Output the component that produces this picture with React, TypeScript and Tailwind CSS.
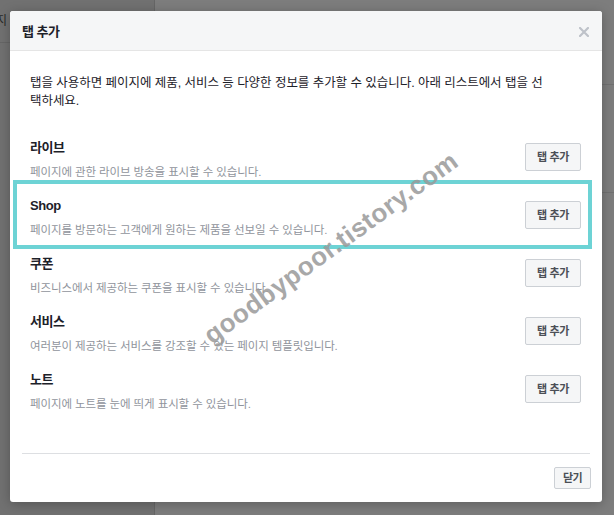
import React from "react";

const items = [
  { t: "라이브", d: "페이지에 관한 라이브 방송을 표시할 수 있습니다." },
  { t: "Shop", d: "페이지를 방문하는 고객에게 원하는 제품을 선보일 수 있습니다." },
  { t: "쿠폰", d: "비즈니스에서 제공하는 쿠폰을 표시할 수 있습니다." },
  { t: "서비스", d: "여러분이 제공하는 서비스를 강조할 수 있는 페이지 템플릿입니다." },
  { t: "노트", d: "페이지에 노트를 눈에 띄게 표시할 수 있습니다." },
];

export default function App() {
  return (
    <div
      className="relative w-[614px] h-[515px] overflow-hidden flex bg-[#7d7d7d]"
      style={{ fontFamily: '"Liberation Sans", "Noto Sans CJK KR", sans-serif' }}
    >
      {/* dimmed page behind */}
      <div className="w-[155px] h-full bg-[#717171] border-r border-[#666666] flex flex-col">
        <div className="h-[43px] border-b border-[#666666] flex items-center">
          <span className="text-[12px] text-[#2a2a2a] -ml-[4px]">지</span>
        </div>
      </div>
      <div className="flex-1 flex flex-col">
        <div className="h-[85px] border-b border-[#717171]" />
        <div className="h-[108px] border-b border-[#717171]" />
      </div>

      {/* dialog */}
      <div className="absolute left-[10px] top-[11px] w-[592px] h-[491px] bg-white rounded-[3px] shadow-[0_2px_12px_rgba(0,0,0,0.25)] flex flex-col">
        <div className="h-[40px] shrink-0 bg-[#f5f6f7] border-b border-[#e5e5e5] rounded-t-[3px] flex items-center justify-between pl-[12px] pr-[13px]">
          <span className="text-[13px] font-bold tracking-[-0.5px] text-[#1d2129] translate-y-[1px]">탭 추가</span>
          <svg width="10" height="10" viewBox="0 0 10 10" className="translate-y-[1px]">
            <path d="M1 1 L9 9 M9 1 L1 9" stroke="#bec2c9" strokeWidth="2.2" strokeLinecap="square" />
          </svg>
        </div>

        <div className="flex-1 pl-[20px] pr-[21px] pt-[23px]">
          <p className="text-[12.5px] leading-[18px] tracking-[-0.05px] text-[#1d2129]">
            탭을 사용하면 페이지에 제품, 서비스 등 다양한 정보를 추가할 수 있습니다. 아래 리스트에서 탭을 선
            <br />
            택하세요.
          </p>
          <div className="mt-[18px] flex flex-col">
            {items.map((it) => (
              <div key={it.t} className="h-[58px] flex items-start justify-between">
                <div className="pt-[11px] flex flex-col">
                  <span className="text-[13px] leading-[18px] font-bold tracking-[-0.4px] text-[#1d2129]">{it.t}</span>
                  <span className="mt-[6px] text-[11.5px] leading-[18px] tracking-[-0.1px] text-[#90949c]">{it.d}</span>
                </div>
                <button className="mt-[15px] w-[56px] h-[28px] bg-[#f5f6f7] border border-[#ccd0d5] rounded-[2px] text-[11px] font-bold tracking-[-0.3px] text-[#4b4f56] flex items-center justify-center">
                  탭 추가
                </button>
              </div>
            ))}
          </div>
        </div>

        <div className="mx-[12px] border-t border-[#dddfe2] pt-[13px] pb-[13px] flex justify-end shrink-0">
          <button className="w-[37px] h-[22px] bg-[#f5f6f7] border border-[#ccd0d5] rounded-[2px] text-[11px] font-bold tracking-[-0.5px] text-[#4b4f56] flex items-center justify-center -mr-[1px]">
            닫기
          </button>
        </div>

        {/* highlight annotation */}
        <div className="absolute left-[3px] top-[169px] w-[579px] h-[69px] border-[4px] border-[#6dd3d5] pointer-events-none" />
      </div>

      {/* watermark */}
      <div className="absolute left-[331px] top-[248px] pointer-events-none">
        <div className="-translate-x-1/2 -translate-y-1/2 -rotate-[36deg] whitespace-nowrap text-[26px] font-bold tracking-[0.5px] text-[#9a9a9a] opacity-85">
          goodbypoor.tistory.com
        </div>
      </div>
    </div>
  );
}
